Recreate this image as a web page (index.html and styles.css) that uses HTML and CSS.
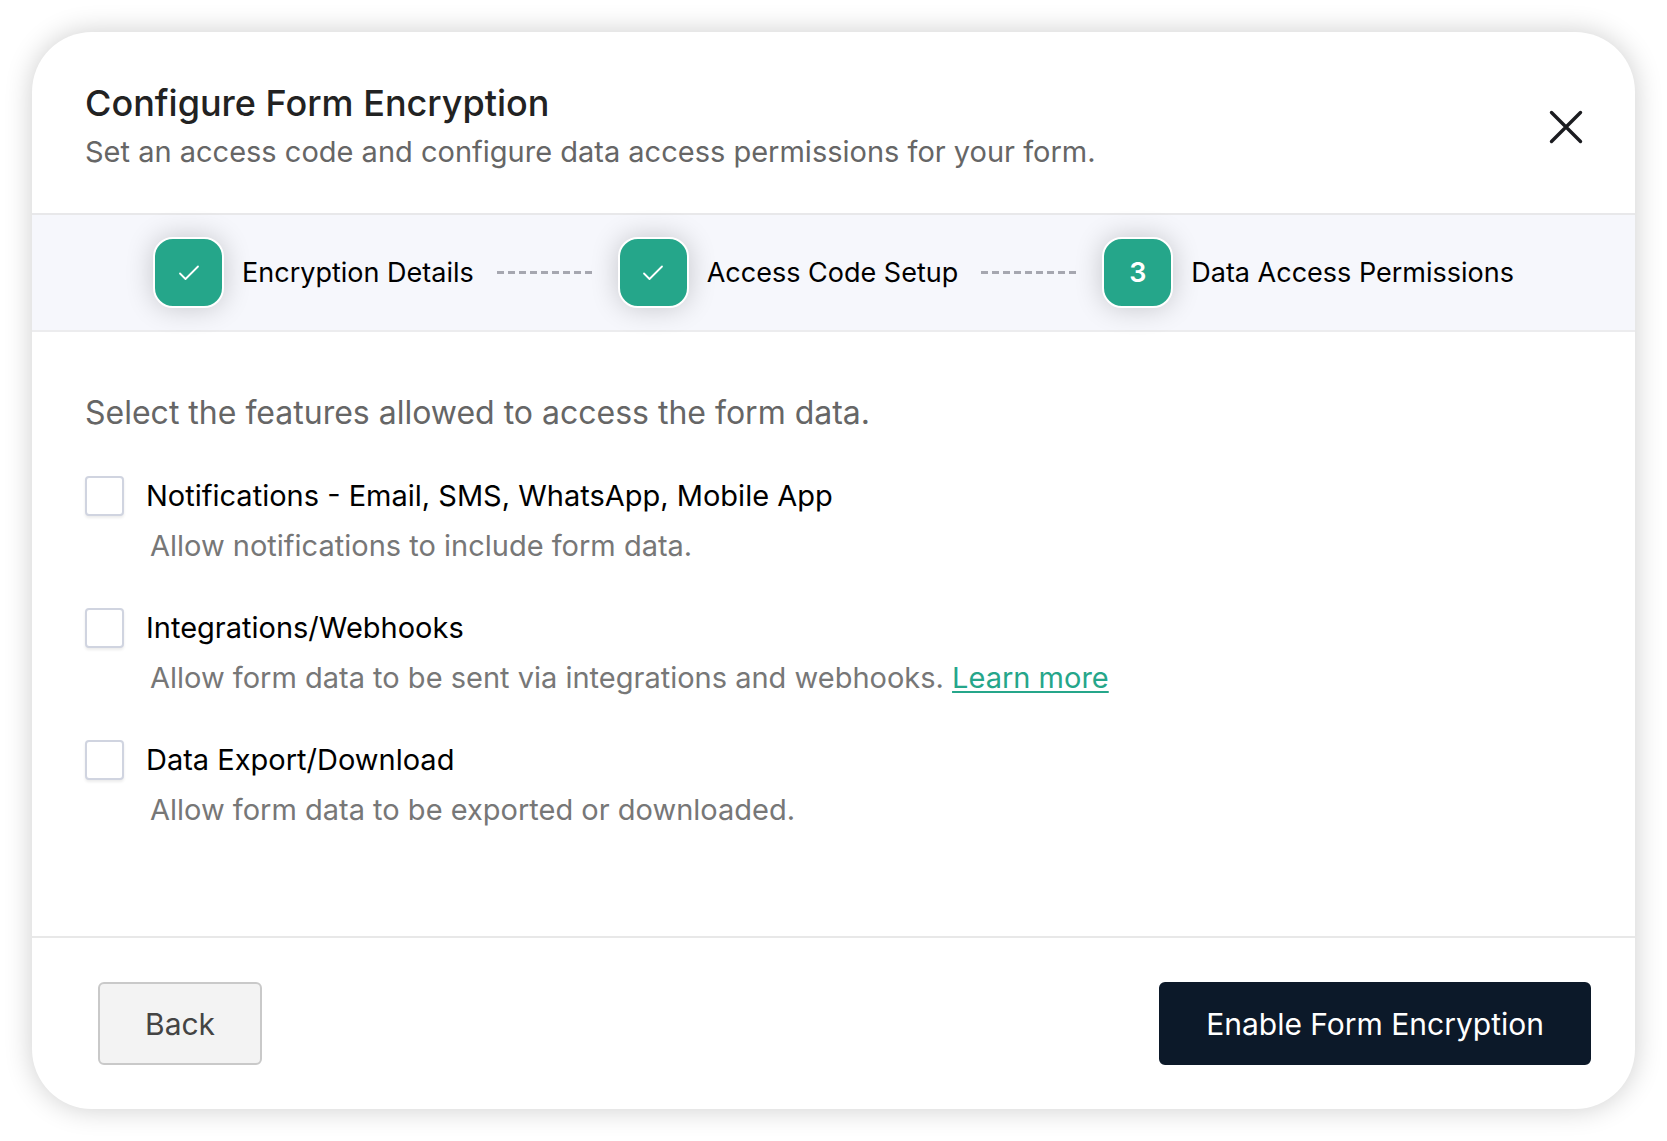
FILE: index.html
```
<!DOCTYPE html>
<html lang="en">
<head>
<meta charset="utf-8">
<meta name="viewport" content="width=device-width, initial-scale=1">
<title>Configure Form Encryption</title>
<link rel="stylesheet" href="styles.css">
</head>
<body>
<div class="modal" role="dialog" aria-labelledby="modal-title">
	<header class="modal-header">
		<div>
			<h1 id="modal-title">Configure Form Encryption</h1>
			<p class="subtitle">Set an access code and configure data access permissions for your form.</p>
		</div>
		<button type="button" class="btn-close" aria-label="Close">
			<svg width="36" height="36" viewBox="0 0 36 36" fill="none" stroke="#1b1c20" stroke-width="3.400" stroke-linecap="round"><path d="M3.500 3.500l29 29M32.500 3.500l-29 29"/></svg>
		</button>
	</header>

	<ol class="steps">
		<li class="step">
			<span class="step-icon"><svg width="22" height="18" viewBox="0 0 22 18" fill="none" stroke="#fff" stroke-width="1.800" stroke-linecap="round" stroke-linejoin="round"><path d="M2 9.500l5.500 5.500L20 2.500"/></svg></span>
			<span>Encryption Details</span>
		</li>
		<li class="step-line" aria-hidden="true"></li>
		<li class="step">
			<span class="step-icon"><svg width="22" height="18" viewBox="0 0 22 18" fill="none" stroke="#fff" stroke-width="1.800" stroke-linecap="round" stroke-linejoin="round"><path d="M2 9.500l5.500 5.500L20 2.500"/></svg></span>
			<span>Access Code Setup</span>
		</li>
		<li class="step-line" aria-hidden="true"></li>
		<li class="step" aria-current="step">
			<span class="step-icon">3</span>
			<span>Data Access Permissions</span>
		</li>
	</ol>

	<form class="modal-form" action="#" method="post">
		<div class="modal-body">
			<p class="intro">Select the features allowed to access the form data.</p>
			<div class="option">
				<input type="checkbox" id="notifications" name="notifications">
				<label for="notifications">Notifications - Email, SMS, WhatsApp, Mobile App</label>
				<p>Allow notifications to include form data.</p>
			</div>
			<div class="option">
				<input type="checkbox" id="integrations" name="integrations">
				<label for="integrations">Integrations/Webhooks</label>
				<p>Allow form data to be sent via integrations and webhooks. <a href="#">Learn more</a></p>
			</div>
			<div class="option">
				<input type="checkbox" id="export" name="export">
				<label for="export">Data Export/Download</label>
				<p>Allow form data to be exported or downloaded.</p>
			</div>
		</div>
		<footer class="modal-footer">
			<button type="button" class="btn btn-back">Back</button>
			<button type="submit" class="btn btn-primary">Enable Form Encryption</button>
		</footer>
	</form>
</div>
</body>
</html>
```

FILE: styles.css
```
* {
	box-sizing: border-box;
}
body {
	margin: 0;
	padding: 32px;
	background: #fff;
	color: #000;
	font-family: Inter, "Liberation Sans", sans-serif;
	font-size: 29px;
	line-height: 36px;
	font-optical-sizing: none;
}
h1, p, ol {
	margin: 0;
	padding: 0;
}
.modal {
	border-radius: 60px;
	background: #fff;
	box-shadow: 0 0 28px rgba(0, 0, 0, 0.2);
}

/* header */
.modal-header {
	display: flex;
	justify-content: space-between;
	align-items: center;
	padding: 48px 51px 39px 53px;
	border-bottom: 2px solid #e8e8ea;
}
.modal-header h1 {
	margin-bottom: 4px;
	color: #222;
	font-size: 36px;
	font-weight: 500;
	line-height: 46px;
}
.subtitle {
	color: #666;
	line-height: 44px;
}
.btn-close {
	display: flex;
	padding: 0;
	border: 0;
	background: none;
	cursor: pointer;
}

/* steps */
.steps {
	display: flex;
	justify-content: center;
	align-items: center;
	gap: 23px;
	padding: 22px 0;
	border-bottom: 2px solid #ececee;
	background: #f6f7fc;
	font-size: 27px;
	list-style: none;
}
.step {
	display: flex;
	align-items: center;
	gap: 18px;
}
.step-icon {
	display: flex;
	justify-content: center;
	align-items: center;
	width: 71px;
	height: 71px;
	border: 2px solid #fff;
	border-radius: 20px;
	background: #25a68a;
	box-shadow: 0 0 28px rgba(0, 0, 0, 0.2);
	color: #fff;
	font-weight: 600;
}
.step-line {
	width: 98px;
	height: 3px;
	background: repeating-linear-gradient(90deg, #a6a7b0 0 7px, transparent 7px 11px);
}

/* options */
.modal-body {
	padding: 59px 53px 108px;
}
.intro {
	margin-bottom: 41px;
	color: #666;
	font-size: 32px;
	line-height: 44px;
}
.option {
	display: grid;
	grid-template-columns: 39px 1fr;
	column-gap: 22px;
	row-gap: 12px;
	align-items: center;
	margin-bottom: 44px;
}
.option:last-child {
	margin-bottom: 0;
}
.option input {
	appearance: none;
	width: 39px;
	height: 40px;
	margin: 0;
	border: 2px solid #d0d4e0;
	border-radius: 4px;
	background: #fff;
	box-shadow: 0 2px 3px rgba(0, 0, 0, 0.08);
}
.option input:checked {
	background: #25a68a;
}
.option p {
	grid-column: 2;
	padding-left: 4px;
	color: #777;
}
.option a {
	color: #25a68a;
	text-decoration-thickness: 2px;
	text-underline-offset: 3px;
}

/* footer */
.modal-footer {
	display: flex;
	justify-content: space-between;
	padding: 44px 44px 44px 66px;
	border-top: 2px solid #e8e8e8;
}
.btn {
	height: 83px;
	padding: 0 45px;
	border: 2px solid;
	border-radius: 6px;
	font: inherit;
	font-size: 30px;
	cursor: pointer;
}
.btn-back {
	border-color: #c9c9c9;
	background: #f3f3f3;
	color: #444;
}
.btn-primary {
	border-color: #0c1929;
	background: #0c1929;
	color: #fff;
}
```
